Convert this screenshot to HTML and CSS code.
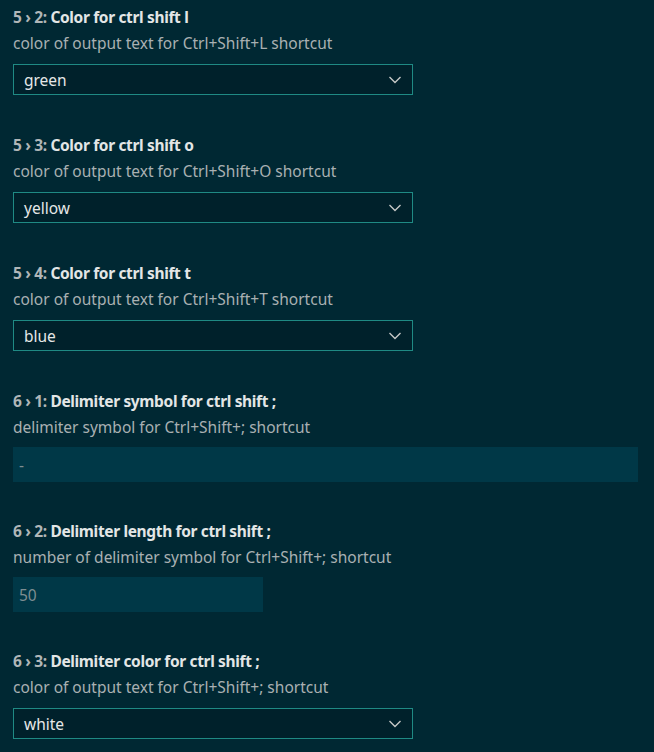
FILE: index.html
```html
<!DOCTYPE html>
<html>
<head>
<meta charset="utf-8">
<link rel="stylesheet" href="styles.css">
</head>
<body>
<div class="list">
  <div class="item">
    <div class="title"><span class="cat">5 › 2: </span>Color for ctrl shift l</div>
    <div class="desc">color of output text for Ctrl+Shift+L shortcut</div>
    <div class="select"><span>green</span><svg width="16" height="16" viewBox="0 0 16 16"><path d="M2.5 5 L8 10.5 L13.5 5" fill="none" stroke="#c5c8c6" stroke-width="1.4"/></svg></div>
  </div>
  <div class="item">
    <div class="title"><span class="cat">5 › 3: </span>Color for ctrl shift o</div>
    <div class="desc">color of output text for Ctrl+Shift+O shortcut</div>
    <div class="select"><span>yellow</span><svg width="16" height="16" viewBox="0 0 16 16"><path d="M2.5 5 L8 10.5 L13.5 5" fill="none" stroke="#c5c8c6" stroke-width="1.4"/></svg></div>
  </div>
  <div class="item">
    <div class="title"><span class="cat">5 › 4: </span>Color for ctrl shift t</div>
    <div class="desc">color of output text for Ctrl+Shift+T shortcut</div>
    <div class="select"><span>blue</span><svg width="16" height="16" viewBox="0 0 16 16"><path d="M2.5 5 L8 10.5 L13.5 5" fill="none" stroke="#c5c8c6" stroke-width="1.4"/></svg></div>
  </div>
  <div class="item tall">
    <div class="title"><span class="cat">6 › 1: </span>Delimiter symbol for ctrl shift ;</div>
    <div class="desc">delimiter symbol for Ctrl+Shift+; shortcut</div>
    <div class="input wide">-</div>
  </div>
  <div class="item tall">
    <div class="title"><span class="cat">6 › 2: </span>Delimiter length for ctrl shift ;</div>
    <div class="desc">number of delimiter symbol for Ctrl+Shift+; shortcut</div>
    <div class="input narrow">50</div>
  </div>
  <div class="item">
    <div class="title"><span class="cat">6 › 3: </span>Delimiter color for ctrl shift ;</div>
    <div class="desc">color of output text for Ctrl+Shift+; shortcut</div>
    <div class="select"><span>white</span><svg width="16" height="16" viewBox="0 0 16 16"><path d="M2.5 5 L8 10.5 L13.5 5" fill="none" stroke="#c5c8c6" stroke-width="1.4"/></svg></div>
  </div>
</div>
</body>
</html>
```
FILE: styles.css
```css
html, body {
  margin: 0;
  padding: 0;
  background: #002833;
  width: 654px;
  height: 752px;
  overflow: hidden;
}
body {
  font-family: "Noto Sans", "Open Sans", sans-serif;
  font-size: 15.5px;
  color: #c0c4c5;
}
.list {
  display: flex;
  flex-direction: column;
  padding: 7px 16px 0 13px;
}
.item {
  display: flex;
  flex-direction: column;
  height: 128px;
}
.item.tall { height: 130px; }
.title {
  font-weight: bold;
  letter-spacing: -0.35px;
  color: #e3e6e6;
  line-height: 20px;
}
.cat {
  color: #b0b6b8;
}
.desc {
  margin-top: 6px;
  line-height: 20px;
  color: #a9b0b2;
}
.select {
  margin-top: 11px;
  width: 400px;
  height: 31px;
  box-sizing: border-box;
  background: #00212b;
  border: 1px solid #1f8a84;
  display: flex;
  align-items: center;
  justify-content: space-between;
  padding: 0 9px 0 10px;
  color: #e6e8e8;
}
.input {
  margin-top: 10px;
  height: 35px;
  box-sizing: border-box;
  background: #003847;
  display: flex;
  align-items: center;
  padding: 0 6px;
  color: #7e8e92;
}
.wide { width: 625px; }
.narrow { width: 250px; }
```
